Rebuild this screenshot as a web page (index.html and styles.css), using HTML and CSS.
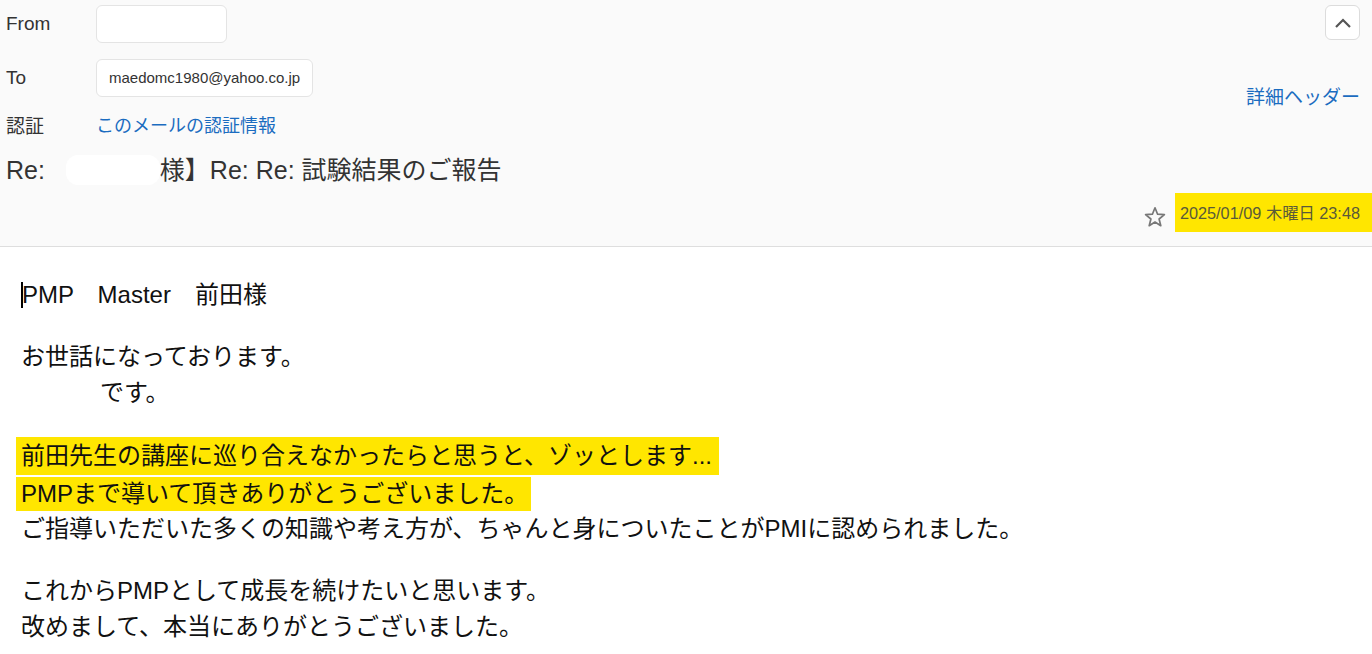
FILE: index.html
```html
<!DOCTYPE html>
<html lang="ja">
<head>
    <meta charset="UTF-8">
    <meta name="viewport" content="width=device-width, initial-scale=1.0">
    <title>Re: Re: 試験結果のご報告</title>
    <link rel="stylesheet" href="styles.css">
</head>
<body>
    <header class="mail-head">
        <div class="head-fields">
            <div class="field">
                <span class="label">From</span>
                <span class="addr addr-blank"></span>
            </div>
            <div class="field">
                <span class="label">To</span>
                <span class="addr">maedomc1980@yahoo.co.jp</span>
            </div>
            <div class="field field-auth">
                <span class="label">認証</span>
                <a class="link" href="#">このメールの認証情報</a>
            </div>
            <h1 class="subject">Re: <span class="masked"></span>様】Re: Re: 試験結果のご報告</h1>
        </div>

        <div class="head-side">
            <button class="collapse" aria-label="閉じる">
                <svg width="18" height="12" viewBox="0 0 18 12"><path d="M2 10 L9 3 L16 10" fill="none" stroke="#555" stroke-width="2.2"/></svg>
            </button>
            <a class="link detail" href="#">詳細ヘッダー</a>
            <div class="date-row">
                <svg class="star" width="24" height="24" viewBox="0 0 24 24"><path d="M12 2.8 L14.6 9.2 L21.4 9.6 L16.1 14 L17.8 20.7 L12 17 L6.2 20.7 L7.9 14 L2.6 9.6 L9.4 9.2 Z" fill="none" stroke="#777" stroke-width="1.7" stroke-linejoin="round"/></svg>
                <span class="date">2025/01/09 木曜日 23:48</span>
            </div>
        </div>
    </header>

    <main class="mail-body">
        <p><span class="caret"></span>PMP　Master　前田様</p>

        <p>お世話になっております。<br><span class="hidden-name"></span>です。</p>

        <p>
            <span class="marked marked-first">前田先生の講座に巡り合えなかったらと思うと、ゾッとします...</span>
            <span class="marked marked-second">PMPまで導いて頂きありがとうございました。</span>
            ご指導いただいた多くの知識や考え方が、ちゃんと身についたことがPMIに認められました。
        </p>

        <p>これからPMPとして成長を続けたいと思います。<br>改めまして、本当にありがとうございました。</p>
    </main>
</body>
</html>
```

FILE: styles.css
```css
body {
    margin: 0;
    background: #fff;
    font-family: "Liberation Sans", "Noto Sans CJK JP", sans-serif;
    color: #333;
}

.mail-head {
    display: flex;
    justify-content: space-between;
    background: #fafafa;
    padding: 5px 0 14px 6px;
    border-bottom: 1px solid #dedede;
}

.head-fields {
    display: flex;
    flex-direction: column;
}

.field {
    display: flex;
    align-items: center;
    height: 38px;
    font-size: 18px;
}

.field + .field {
    margin-top: 16px;
}

.field-auth {
    height: 30px;
    margin-top: 12px !important;
}

.label {
    width: 90px;
    font-size: 19px;
    color: #333;
}

.addr {
    box-sizing: border-box;
    height: 38px;
    line-height: 36px;
    padding: 0 12px;
    background: #fff;
    border: 1px solid #e4e4e4;
    border-radius: 6px;
    font-size: 15px;
    color: #333;
}

.addr-blank {
    width: 131px;
}

.link {
    color: #1b6cc0;
    text-decoration: none;
}

.subject {
    margin: 14px 0 0;
    font-size: 25px;
    font-weight: normal;
    line-height: 34px;
    color: #333;
    white-space: nowrap;
}

.masked {
    display: inline-block;
    width: 94px;
    height: 30px;
    margin-left: 14px;
    background: #fff;
    border-radius: 12px;
    vertical-align: -6px;
}

.head-side {
    display: flex;
    flex-direction: column;
    align-items: flex-end;
    padding-right: 12px;
}

.collapse {
    display: flex;
    align-items: center;
    justify-content: center;
    width: 35px;
    height: 35px;
    padding: 0;
    background: #fff;
    border: 1px solid #dcdcdc;
    border-radius: 6px;
    cursor: pointer;
}

.detail {
    margin-top: 46px;
    font-size: 19px;
    line-height: 24px;
}

.date-row {
    display: flex;
    align-items: center;
    margin-top: 83px;
    margin-right: -12px;
}

.star {
    margin: 8px 8px 0 0;
}

.date {
    height: 39px;
    line-height: 41px;
    padding: 0 12px 0 5px;
    background: #ffe600;
    font-size: 16.3px;
    color: #5a5a3a;
}

.mail-body {
    padding: 30px 21px 0;
    font-size: 24px;
    color: #111;
}

.mail-body p {
    margin: 0 0 26px;
    line-height: 36px;
}

.caret {
    display: inline-block;
    width: 2px;
    height: 26px;
    margin-right: -1px;
    background: #000;
    vertical-align: -5px;
}

.hidden-name {
    display: inline-block;
    width: 79px;
}

.marked {
    display: block;
    width: fit-content;
    margin-left: -5px;
    padding: 0 7px 0 5px;
    background: #ffe600;
}

.marked-first {
    line-height: 38px;
}

.marked-second {
    margin-top: 2px;
    padding-right: 3px;
    line-height: 34px;
}
```
